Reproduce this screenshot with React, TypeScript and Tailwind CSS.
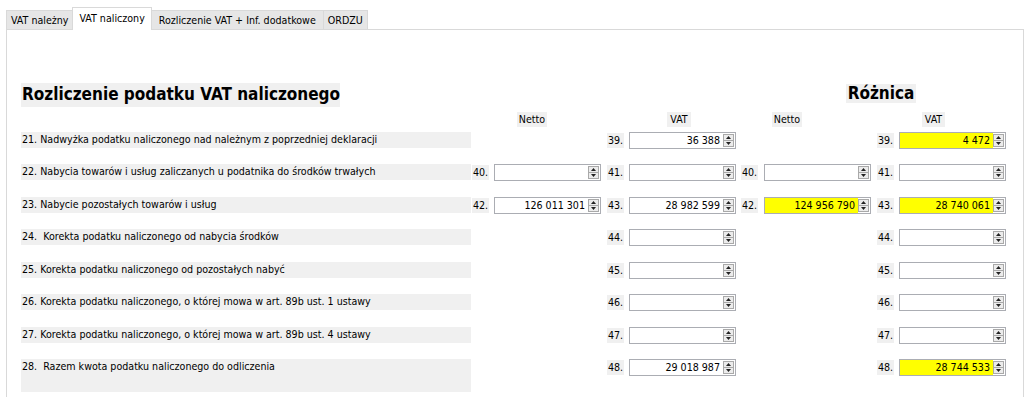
import React from "react";

type Cell = { n: string; v?: string; hl?: boolean } | null;

interface Row {
  label: string;
  a: Cell;
  b: Cell;
  c: Cell;
  d: Cell;
  tall?: boolean;
}

const rows: Row[] = [
  {
    label: "21. Nadwyżka podatku naliczonego nad należnym z poprzedniej deklaracji",
    a: null,
    b: { n: "39.", v: "36 388" },
    c: null,
    d: { n: "39.", v: "4 472", hl: true },
  },
  {
    label: "22. Nabycia towarów i usług zaliczanych u podatnika do środków trwałych",
    a: { n: "40." },
    b: { n: "41." },
    c: { n: "40." },
    d: { n: "41." },
  },
  {
    label: "23. Nabycie pozostałych towarów i usług",
    a: { n: "42.", v: "126 011 301" },
    b: { n: "43.", v: "28 982 599" },
    c: { n: "42.", v: "124 956 790", hl: true },
    d: { n: "43.", v: "28 740 061", hl: true },
  },
  { label: "24.  Korekta podatku naliczonego od nabycia środków", a: null, b: { n: "44." }, c: null, d: { n: "44." } },
  { label: "25. Korekta podatku naliczonego od pozostałych nabyć", a: null, b: { n: "45." }, c: null, d: { n: "45." } },
  { label: "26. Korekta podatku naliczonego, o której mowa w art. 89b ust. 1 ustawy", a: null, b: { n: "46." }, c: null, d: { n: "46." } },
  { label: "27. Korekta podatku naliczonego, o której mowa w art. 89b ust. 4 ustawy", a: null, b: { n: "47." }, c: null, d: { n: "47." } },
  {
    label: "28.  Razem kwota podatku naliczonego do odliczenia",
    a: null,
    b: { n: "48.", v: "29 018 987" },
    c: null,
    d: { n: "48.", v: "28 744 533", hl: true },
    tall: true,
  },
];

function Spin() {
  return (
    <div className="flex flex-col w-[11px] h-[13px] border border-[#a9a9a9] bg-[#ececec] mr-[1px] shrink-0">
      <div className="flex-1 flex items-center justify-center border-b border-[#a9a9a9]">
        <svg width="5" height="3" viewBox="0 0 5 3">
          <path d="M0 3 L2.5 0 L5 3Z" fill="#222" />
        </svg>
      </div>
      <div className="flex-1 flex items-center justify-center">
        <svg width="5" height="3" viewBox="0 0 5 3">
          <path d="M0 0 L2.5 3 L5 0Z" fill="#222" />
        </svg>
      </div>
    </div>
  );
}

function NumInput({ v, hl }: { v?: string; hl?: boolean }) {
  return (
    <div className="w-[107px] h-[17px] border border-[#abadb3] bg-white flex items-center">
      <div className={`flex-1 h-full text-right pr-[3px] leading-[15px] ${hl ? "bg-[#ffff00]" : ""}`}>{v}</div>
      <Spin />
    </div>
  );
}

function Field({ cell, numW, pl }: { cell: Cell; numW: string; pl: string }) {
  if (!cell) return null;
  return (
    <>
      <div className={`${numW} ${pl} shrink-0 h-[17px] flex items-center`}>
        <span className="bg-[#f0f0f0] px-[1px] leading-[15px]">{cell.n}</span>
      </div>
      <NumInput v={cell.v} hl={cell.hl} />
    </>
  );
}

function Blank({ numW }: { numW: string }) {
  return (
    <>
      <div className={`${numW} shrink-0`} />
      <div className="w-[107px] shrink-0" />
    </>
  );
}

export default function App() {
  return (
    <div className="w-[1032px] h-[397px] bg-white overflow-hidden text-[10.6px] text-black font-['DejaVu_Sans_Condensed','DejaVu_Sans',sans-serif]">
      {/* tabs */}
      <div className="flex items-end h-[29px] pl-[6px]">
        <div className="h-[19px] px-[4px] pt-[2px] bg-[#e6e6e6] border border-b-0 border-[#d9d9d9]">VAT należny</div>
        <div className="h-[23px] px-[6px] pt-[3px] bg-white border border-b-0 border-[#d9d9d9] -ml-px -mb-px relative z-10">
          VAT naliczony
        </div>
        <div className="h-[19px] px-[7px] pt-[2px] bg-[#e6e6e6] border border-b-0 border-[#d9d9d9] -ml-px">
          Rozliczenie VAT + Inf. dodatkowe
        </div>
        <div className="h-[19px] px-[4px] pt-[2px] bg-[#e6e6e6] border border-b-0 border-[#d9d9d9] -ml-px">ORDZU</div>
      </div>

      {/* panel */}
      <div className="ml-[6px] w-[1018px] h-[390px] border border-[#d9d9d9] pl-[14px] pt-[53px]">
        {/* headings */}
        <div className="flex items-start">
          <div className="w-[319px] h-[24px] bg-[#f0f0f0] flex items-center pl-[1px] font-bold text-[17px] whitespace-nowrap">
            Rozliczenie podatku VAT naliczonego
          </div>
          <div className="ml-[506px] mt-[1px] w-[70px] h-[19px] bg-[#f0f0f0] flex items-center justify-center font-bold text-[17px] whitespace-nowrap">
            Różnica
          </div>
        </div>
        <div className="flex mt-[5px] h-[15px] items-center">
          <div className="ml-[496px] w-[30px] bg-[#f0f0f0] text-center">Netto</div>
          <div className="ml-[120px] w-[24px] bg-[#f0f0f0] text-center">VAT</div>
          <div className="ml-[81px] w-[30px] bg-[#f0f0f0] text-center">Netto</div>
          <div className="ml-[120px] w-[23px] bg-[#f0f0f0] text-center">VAT</div>
        </div>

        {/* rows */}
        <div className="flex flex-col gap-[15.43px] mt-[5px]">
          {rows.map((r) => (
            <div key={r.label} className="flex items-start">
              <div className={`w-[450px] shrink-0 bg-[#f0f0f0] whitespace-pre pl-[1px] leading-[15px] ${r.tall ? "h-[33px]" : "h-[16px]"}`}>
                {r.label}
              </div>
              {r.a ? <Field cell={r.a} numW="w-[23px]" pl="pl-[1px]" /> : <Blank numW="w-[23px]" />}
              {r.b ? <Field cell={r.b} numW="w-[28px]" pl="pl-[6px]" /> : <Blank numW="w-[28px]" />}
              {r.c ? <Field cell={r.c} numW="w-[28px]" pl="pl-[5px]" /> : <Blank numW="w-[28px]" />}
              {r.d ? <Field cell={r.d} numW="w-[28px]" pl="pl-[6px]" /> : <Blank numW="w-[28px]" />}
            </div>
          ))}
        </div>
      </div>
    </div>
  );
}
